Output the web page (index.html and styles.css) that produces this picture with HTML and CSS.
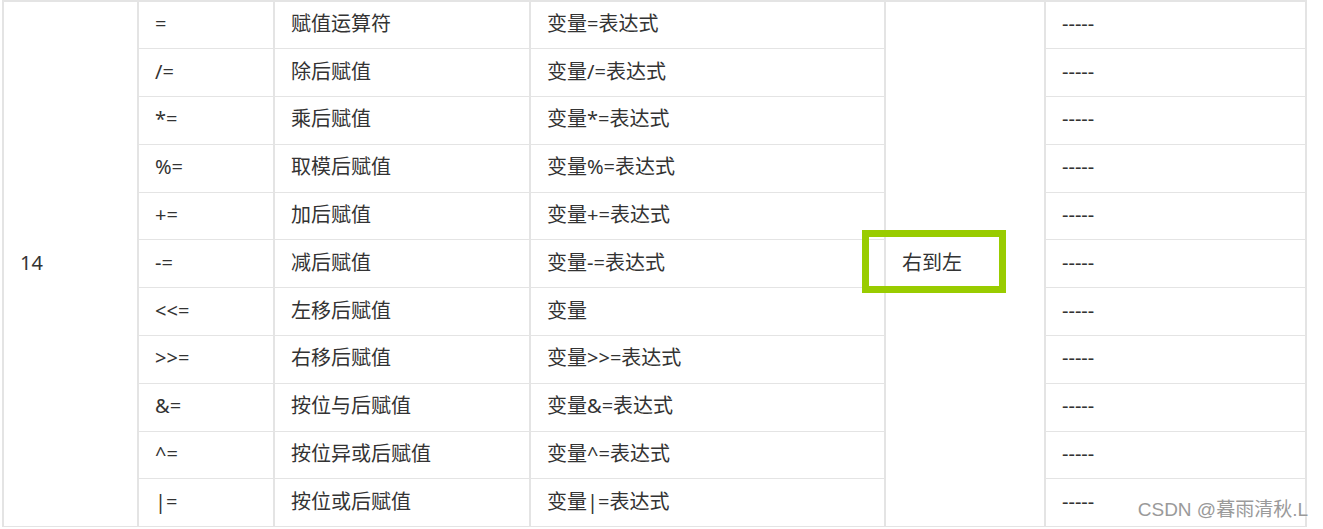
FILE: index.html
```html
<!DOCTYPE html>
<html lang="zh">
<head>
<meta charset="utf-8">
<title>赋值运算符</title>
<link rel="stylesheet" href="styles.css">
</head>
<body>
<div class="wrap">
  <table class="ops">
    <colgroup>
      <col class="c1"><col class="c2"><col class="c3"><col class="c4"><col class="c5"><col class="c6">
    </colgroup>
    <tbody>
      <tr><td rowspan="11">14</td><td>=</td><td>赋值运算符</td><td>变量=表达式</td><td rowspan="11" class="assoc">右到左</td><td>-----</td></tr>
      <tr><td>/=</td><td>除后赋值</td><td>变量/=表达式</td><td>-----</td></tr>
      <tr><td>*=</td><td>乘后赋值</td><td>变量*=表达式</td><td>-----</td></tr>
      <tr><td>%=</td><td>取模后赋值</td><td>变量%=表达式</td><td>-----</td></tr>
      <tr><td>+=</td><td>加后赋值</td><td>变量+=表达式</td><td>-----</td></tr>
      <tr><td>-=</td><td>减后赋值</td><td>变量-=表达式</td><td>-----</td></tr>
      <tr><td>&lt;&lt;=</td><td>左移后赋值</td><td>变量</td><td>-----</td></tr>
      <tr><td>&gt;&gt;=</td><td>右移后赋值</td><td>变量&gt;&gt;=表达式</td><td>-----</td></tr>
      <tr><td>&amp;=</td><td>按位与后赋值</td><td>变量&amp;=表达式</td><td>-----</td></tr>
      <tr><td>^=</td><td>按位异或后赋值</td><td>变量^=表达式</td><td>-----</td></tr>
      <tr><td>|=</td><td>按位或后赋值</td><td>变量|=表达式</td><td>-----</td></tr>
    </tbody>
  </table>
  <div class="highlight"></div>
  <div class="watermark">CSDN @暮雨清秋.L</div>
</div>
</body>
</html>
```
FILE: styles.css
```css
html, body {
  margin: 0;
  padding: 0;
  background: #ffffff;
}

.wrap {
  position: relative;
  width: 1323px;
  height: 529px;
  overflow: hidden;
}

.ops {
  margin-left: 2px;
  width: 1303px;
  table-layout: fixed;
  border-collapse: collapse;
  font-family: "Noto Sans", "Noto Sans CJK SC", sans-serif;
  font-size: 20px;
  color: #333333;
}

.c1 { width: 135px; }
.c2 { width: 136px; }
.c3 { width: 256px; }
.c4 { width: 355px; }
.c5 { width: 160px; }
.c6 { width: 261px; }

.ops tr {
  height: 47.8px;
}

.ops td {
  border-left: 2px solid #e4e4e4;
  border-right: 2px solid #e4e4e4;
  border-top: 1px solid #e4e4e4;
  border-bottom: 1px solid #e4e4e4;
  padding: 0 8px 2px 16px;
  line-height: 24px;
  vertical-align: middle;
  white-space: nowrap;
}

.ops tr:first-child td {
  border-top: 2px solid #e4e4e4;
}

.highlight {
  position: absolute;
  left: 862px;
  top: 230px;
  width: 144px;
  height: 63px;
  box-sizing: border-box;
  border: 7px solid #99cc00;
}

.watermark {
  position: absolute;
  right: 15px;
  top: 498px;
  font-family: "Liberation Sans", "Noto Sans CJK SC", sans-serif;
  font-size: 19px;
  line-height: 24px;
  color: #9a9a9a;
  text-shadow: 0 0 2px #ffffff;
}
```
